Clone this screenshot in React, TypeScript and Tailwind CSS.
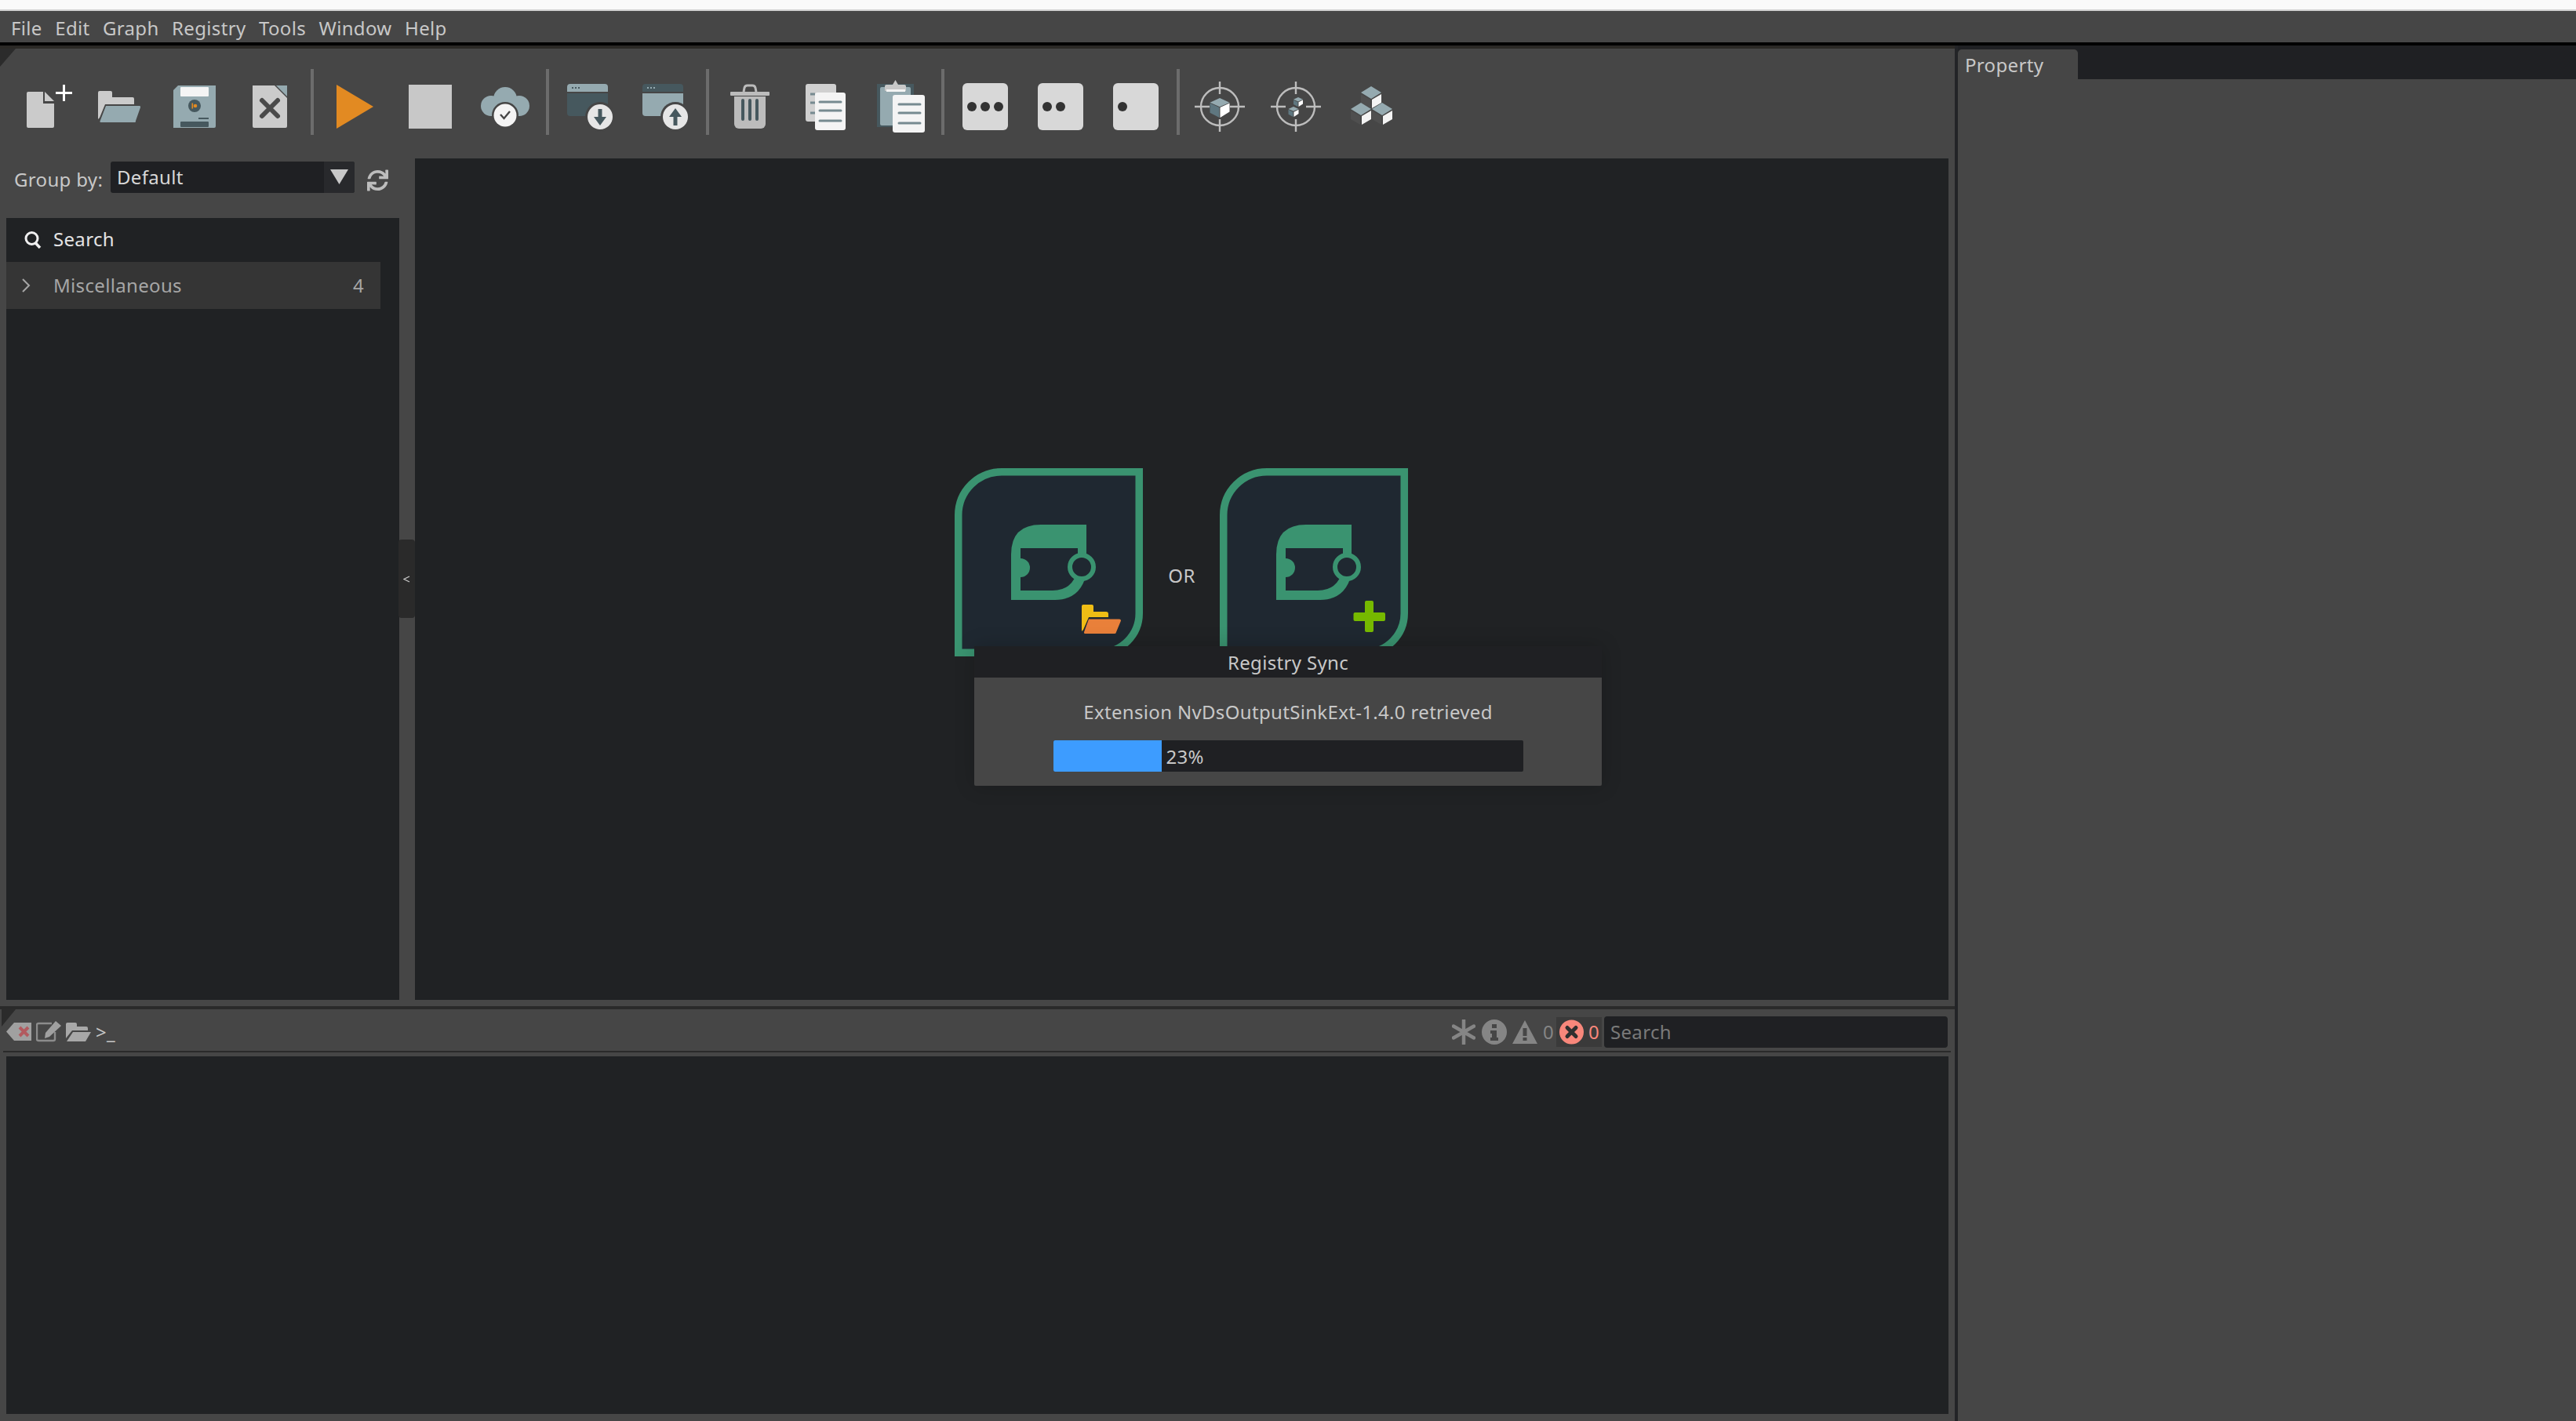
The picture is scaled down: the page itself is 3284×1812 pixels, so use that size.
import { FaSync } from 'react-icons/fa';

const MENU = ['File', 'Edit', 'Graph', 'Registry', 'Tools', 'Window', 'Help'];

const SLATE = '#95aab0';
const DEEP = '#46585e';
const LIGHT = '#cbcbcb';
const PAPER = '#f4f4f4';
const LINE = '#768a90';

function Cell({ children }: { children: React.ReactNode }) {
  return (
    <svg viewBox="0 0 96 96" className="w-[96px] h-[96px] shrink-0 overflow-visible">
      {children}
    </svg>
  );
}

function Sep() {
  return <div className="w-[4px] h-[84px] mx-[4px] bg-[#6c6c6c] shrink-0" />;
}

function Cube({ x, y, s }: { x: number; y: number; s: number }) {
  // x,y is the top point of the cube, s the half width
  const h = s * 0.45;
  return (
    <g>
      <path d={`M${x} ${y} L${x + s} ${y + h} L${x} ${y + 2 * h} L${x - s} ${y + h}Z`} fill={SLATE} />
      <path d={`M${x - s} ${y + h + 0.8} L${x - 0.5} ${y + 2 * h + 0.8} V${y + 2 * h + s * 1.1} L${x - s} ${y + h + s * 1.05}Z`} fill="#5f7780" />
      <path d={`M${x + s} ${y + h + 0.8} L${x + 0.5} ${y + 2 * h + 0.8} V${y + 2 * h + s * 1.1} L${x + s} ${y + h + s * 0.95}Z`} fill="#ffffff" />
    </g>
  );
}

function Target({ cx, children }: { cx: number; children: React.ReactNode }) {
  return (
    <Cell>
      <circle cx={cx} cy={48} r={24} fill="none" stroke="#bdbdbd" strokeWidth={2.4} />
      <path
        d={`M${cx} 16 V32 M${cx} 64 V80 M${cx - 32} 48 H${cx - 13} M${cx + 13} 48 H${cx + 32}`}
        stroke="#bdbdbd"
        strokeWidth={2.4}
        fill="none"
      />
      {children}
    </Cell>
  );
}

function Card({ dots }: { dots: number }) {
  const xs = [31, 48, 65].slice(0, dots);
  return (
    <Cell>
      <rect x={19} y={18} width={58} height={60} rx={6} fill="#d8d8d8" />
      {xs.map((x) => (
        <circle key={x} cx={x} cy={48} r={6} fill="#333333" />
      ))}
    </Cell>
  );
}

function Block({ cx, cy }: { cx: number; cy: number }) {
  return (
    <g>
      <path d={`M${cx} ${cy - 8} L${cx + 13} ${cy} L${cx} ${cy + 8} L${cx - 13} ${cy}Z`} fill={SLATE} />
      <path d={`M${cx - 13} ${cy + 2} L${cx - 1} ${cy + 9} V${cy + 20} L${cx - 13} ${cy + 13}Z`} fill="#4f4f4f" />
      <path d={`M${cx + 13} ${cy + 2} L${cx + 1} ${cy + 9} V${cy + 20} L${cx + 13} ${cy + 13}Z`} fill="#f4f4f4" />
    </g>
  );
}

function Toolbar() {
  return (
    <div className="relative h-[140px] bg-[#464646] flex items-start pt-[26px] pl-[8px]">
      <svg viewBox="0 0 20 23" className="absolute left-0 top-0 w-[20px] h-[23px]">
        <path d="M0 0H20L0 23Z" fill="#2b2b2b" />
      </svg>

      {/* new */}
      <Cell>
        <path d="M28 29H47V44H61V73a2 2 0 0 1-2 2H28a2 2 0 0 1-2-2V31a2 2 0 0 1 2-2Z" fill={LIGHT} />
        <path d="M49 29L61 41H49Z" fill={LIGHT} />
        <path d="M63 30.5H84M73.5 20V41" stroke="#ffffff" strokeWidth={3} />
      </Cell>
      {/* open */}
      <Cell>
        <path d="M21 30a2 2 0 0 1 2-2h14a2 2 0 0 1 2 2v6h26a2 2 0 0 1 2 2v7H30L23 62l-2 2Z" fill={LIGHT} />
        <path d="M31 47H74a1.5 1.5 0 0 1 1 2L69 66a1.5 1.5 0 0 1-1.5 2H24.5a1 1 0 0 1-1-1.5Z" fill={SLATE} />
      </Cell>
      {/* save */}
      <Cell>
        <path d="M27 21H75V73a2 2 0 0 1-2 2H21V27Z" fill={SLATE} />
        <rect x={30} y={23} width={36} height={12} rx={1} fill={PAPER} />
        <circle cx={48} cy={47} r={8} fill={DEEP} />
        <rect x={44.5} y={43.5} width={1.6} height={7} fill="#e28a22" />
        <circle cx={49} cy={47} r={2.3} fill="#e28a22" />
        <rect x={53} y={62} width={13} height={2} fill={DEEP} />
        <rect x={30} y={67} width={36} height={7} rx={1} fill={DEEP} />
      </Cell>
      {/* close */}
      <Cell>
        <path d="M26 21H54L70 37V73a2 2 0 0 1-2 2H28a2 2 0 0 1-2-2Z" fill={LIGHT} />
        <path d="M56 21H70V35Z" fill={SLATE} />
        <path d="M38 40L58 60M58 40L38 60" stroke="#4a4a4a" strokeWidth={6} strokeLinecap="round" />
      </Cell>
      <Sep />
      {/* run */}
      <Cell>
        <path d="M25 20L72 48L25 76Z" fill="#e28a22" />
      </Cell>
      {/* stop */}
      <Cell>
        <rect x={21} y={20} width={55} height={56} fill="#c8c8c8" />
      </Cell>
      {/* sync */}
      <Cell>
        <circle cx={48} cy={38} r={15} fill={SLATE} />
        <circle cx={30} cy={47} r={13} fill={SLATE} />
        <circle cx={66} cy={47} r={13} fill={SLATE} />
        <rect x={30} y={42} width={36} height={18} fill={SLATE} />
        <circle cx={48} cy={59} r={17} fill="#464646" />
        <circle cx={48} cy={59} r={14.5} fill={PAPER} />
        <path d="M42 58l4.5 5L54 54" stroke="#464646" strokeWidth={2.4} fill="none" />
      </Cell>
      <Sep />
      {/* import */}
      <Cell>
        <path d="M19 29V23a4 4 0 0 1 4-4H67a4 4 0 0 1 4 4V29Z" fill={SLATE} />
        <path d="M19 31H71V56a4 4 0 0 1-4 4H23a4 4 0 0 1-4-4Z" fill={DEEP} />
        <path d="M25 24h2M29 24h2M33 24h2" stroke={DEEP} strokeWidth={2} />
        <circle cx={61} cy={61} r={19} fill="#464646" />
        <circle cx={61} cy={61} r={16} fill="#e6e6e6" />
        <path d="M58.5 51h5v10h5.5l-8 11-8-11h5.5Z" fill={DEEP} />
      </Cell>
      {/* export */}
      <Cell>
        <path d="M19 29V23a4 4 0 0 1 4-4H67a4 4 0 0 1 4 4V29Z" fill={DEEP} />
        <path d="M19 31H71V56a4 4 0 0 1-4 4H23a4 4 0 0 1-4-4Z" fill={SLATE} />
        <path d="M25 24h2M29 24h2M33 24h2" stroke={SLATE} strokeWidth={2} />
        <circle cx={61} cy={61} r={19} fill="#464646" />
        <circle cx={61} cy={61} r={16} fill="#e6e6e6" />
        <path d="M58.5 72h5V61h5.5l-8-11-8 11h5.5Z" fill={DEEP} />
      </Cell>
      <Sep />
      {/* delete */}
      <Cell>
        <path d="M40 29l1-5a4 4 0 0 1 4-3h6a4 4 0 0 1 4 3l1 5" stroke="#bcbcbc" strokeWidth={3} fill="none" />
        <rect x={23} y={29} width={50} height={5} rx={1} fill="#bcbcbc" />
        <path d="M28 35H68V70a6 6 0 0 1-6 6H34a6 6 0 0 1-6-6Z" fill="#bcbcbc" />
        <path d="M39 40V64M48 40V64M57 40V64" stroke={DEEP} strokeWidth={4} strokeLinecap="round" />
      </Cell>
      {/* copy */}
      <Cell>
        <rect x={23} y={19} width={39} height={48} rx={3} fill="#d0d0d0" />
        <path d="M29 32h6M29 43h6M29 56h6" stroke={LINE} strokeWidth={3} />
        <rect x={35} y={30} width={39} height={48} rx={3} fill={PAPER} />
        <path d="M41 42H68M41 53H68M41 66H68" stroke={LINE} strokeWidth={3} strokeLinecap="round" />
      </Cell>
      {/* paste */}
      <Cell>
        <rect x={18} y={19} width={47} height={55} fill={DEEP} />
        <rect x={22} y={23} width={39} height={49} rx={2} fill={SLATE} />
        <path d="M28 28V22a2 2 0 0 1 2-2h8l3.5-6 3.5 6h8a2 2 0 0 1 2 2V28Z" fill="#c8c8c8" />
        <rect x={30} y={26} width={24} height={3} fill={PAPER} />
        <rect x={38} y={33} width={41} height={48} rx={3} fill={PAPER} />
        <path d="M46 45H73M46 56H73M46 69H73" stroke={LINE} strokeWidth={3} strokeLinecap="round" />
      </Cell>
      <Sep />
      <Card dots={3} />
      <Card dots={2} />
      <Card dots={1} />
      <Sep />
      <Target cx={47}>
        <Cube x={47} y={37} s={12.5} />
      </Target>
      <Target cx={48}>
        <Cube x={51} y={36} s={6} />
        <Cube x={45} y={48} s={6.5} />
      </Target>
      <Cell>
        <Block cx={48} cy={30} />
        <Block cx={35} cy={51} />
        <Block cx={62} cy={51} />
      </Cell>
    </div>
  );
}

function GraphLogo({ children }: { children: React.ReactNode }) {
  return (
    <svg viewBox="0 0 240 240" className="w-[240px] h-[240px] mb-[36px] shrink-0 -translate-x-[1px]">
      <path
        d="M4.75 235.25V60A55.25 55.25 0 0 1 60 4.75H235.25V185A50.25 50.25 0 0 1 185 235.25Z"
        fill="#1f2831"
        stroke="#3a9370"
        strokeWidth={9.5}
      />
      <path
        fillRule="evenodd"
        d="M72 168V110Q72 72 110 72H168V135Q160 168 128 168ZM84 102V156H125Q150 156 157 130V102Z"
        fill="#3a9370"
      />
      <path d="M84 115a12 12 0 0 1 0 24Z" fill="#3a9370" />
      <circle cx={162} cy={126} r={15} fill="#1f2831" stroke="#3a9370" strokeWidth={6} />
      {children}
    </svg>
  );
}

function Canvas() {
  return (
    <div className="relative w-[1955px] h-full bg-[#202224] flex items-center justify-center pb-[8px]">
      <GraphLogo>
        <path d="M162 176a2 2 0 0 1 2-2h11a2 2 0 0 1 2 2v7h16a3 3 0 0 1 3 3v4h-25l-7 16-2 2Z" fill="#efbd15" />
        <path d="M171 192.5H210a2 2 0 0 1 2 2L206 209a2 2 0 0 1-2 2H166a1.5 1.5 0 0 1-1-2Z" fill="#e9803a" />
      </GraphLogo>
      <div className="w-[98px] -mt-[2px] text-center leading-[32px] text-[#c8c8c8]">OR</div>
      <GraphLogo>
        <rect x={185} y={169} width={11} height={40} rx={2} fill="#76b900" />
        <rect x={170.5} y={184} width={40.5} height={11} rx={2} fill="#76b900" />
      </GraphLogo>

      {/* Registry Sync dialog */}
      <div className="absolute left-[713px] top-[622px] w-[800px] h-[178px] flex flex-col shadow-[0_0_24px_rgba(0,0,0,0.2)]">
        <div className="h-[40px] bg-[#1f2023] text-center leading-[42px] text-[#c8c8c8]">Registry Sync</div>
        <div className="flex-1 bg-[#464646] rounded-b-[2px] flex flex-col items-center">
          <div className="h-[80px] pt-[26px] leading-[36px] text-[#c8c8c8]">Extension NvDsOutputSinkExt-1.4.0 retrieved</div>
          <div className="w-[599px] h-[40px] bg-[#1f2023] rounded-[2px] flex items-center">
            <div className="w-[138px] h-full bg-[#3d9cff] rounded-l-[2px]" />
            <span className="ml-[6px] mt-[1px] text-[#c8c8c8]">23%</span>
          </div>
        </div>
      </div>
    </div>
  );
}

function SidePanel() {
  return (
    <div className="relative w-[529px] h-full flex flex-col">
      <div className="h-[76px] flex items-start pt-[4px] pl-[18px]">
        <span className="w-[123px] h-[40px] mt-[3px] leading-[40px] text-[#c8c8c8]">Group by:</span>
        <div className="w-[311px] h-[40px] bg-[#1f2023] rounded-[3px] flex overflow-hidden">
          <span className="flex-1 pl-[8px] leading-[40px] text-[#d8d8d8]">Default</span>
          <div className="w-[39px] bg-[#28292c] flex items-start justify-center pt-[10px]">
            <svg viewBox="0 0 23 19" className="w-[23px] h-[19px]">
              <path d="M0 0H23L11.5 19Z" fill="#c8c8c8" />
            </svg>
          </div>
        </div>
        <FaSync className="ml-[16px] mt-[10px] w-[27px] h-[28px] text-[#bdbdbd]" />
      </div>
      <div className="flex-1 ml-[8px] mr-[20px] bg-[#202224]">
        <div className="h-[56px] flex items-center pl-[23px]">
          <svg viewBox="0 0 22 22" className="w-[22px] h-[22px]">
            <circle cx={9.5} cy={9} r={7.5} fill="none" stroke="#f0f0f0" strokeWidth={3} />
            <path d="M14 14.5L20 21" stroke="#f0f0f0" strokeWidth={3.5} />
          </svg>
          <span className="ml-[15px] -mt-[2px] text-[#e4e4e4]">Search</span>
        </div>
        <div className="w-[477px] h-[60px] bg-[#353535] flex items-center pl-[19px] pr-[21px] text-[#a6a6a6]">
          <svg viewBox="0 0 12 18" className="w-[12px] h-[18px]">
            <path d="M2 1L10 9L2 17" fill="none" stroke="#a6a6a6" strokeWidth={2} />
          </svg>
          <span className="ml-[29px] flex-1">Miscellaneous</span>
          <span>4</span>
        </div>
      </div>
      {/* collapse handle */}
      <div className="absolute left-[508px] top-[486px] w-[21px] h-[100px] bg-[#2a2a2a] rounded-[4px] flex items-center justify-center">
        <svg viewBox="0 0 9 9" className="w-[9px] h-[9px]">
          <path d="M8 1L1 4.5L8 8" fill="none" stroke="#c8c8c8" strokeWidth={1.3} />
        </svg>
      </div>
    </div>
  );
}

function ConsoleBar() {
  return (
    <div className="h-[55px] ml-[4px] mr-[5px] bg-[#464646] border-b-[2px] border-[#2a2a2a] flex items-center relative">
      <svg viewBox="0 0 18 22" className="absolute -left-[4px] top-0 w-[22px] h-[22px]">
        <path d="M0 0H18L0 22Z" fill="#2b2b2b" />
      </svg>
      <div className="ml-[4px] flex items-center mt-[4px]">
        <svg viewBox="0 0 32 24" className="w-[32px] h-[24px]">
          <path d="M10 0H32V23H10L0 11.5Z" fill="#a0a0a0" />
          <path d="M17 6L28 17M28 6L17 17" stroke="#b25a5f" strokeWidth={4} />
        </svg>
        <svg viewBox="0 0 32 27" className="ml-[6px] w-[32px] h-[27px]">
          <path d="M20 3H3a2 2 0 0 0-2 2V23a2 2 0 0 0 2 2H22a2 2 0 0 0 2-2V14" fill="none" stroke="#8c8c8c" strokeWidth={2.4} />
          <path d="M25 0L32 6L17 20L11 22L12 15Z" fill="#a0a0a0" />
        </svg>
        <svg viewBox="0 0 32 24" className="ml-[6px] w-[32px] h-[24px]">
          <path d="M0 2a2 2 0 0 1 2-2h10a2 2 0 0 1 2 2v3h12a2 2 0 0 1 2 2v3H8L0 20Z" fill="#a8a8a8" />
          <path d="M9 12H32L25 24H1Z" fill="#a8a8a8" />
        </svg>
        <span className="ml-[6px] text-[#c8c8c8] leading-[28px]">&gt;_</span>
      </div>

      <div className="ml-auto flex items-center pr-[4px] h-[38px] mt-[4px]">
        <svg viewBox="0 0 30 32" className="w-[30px] h-[32px]">
          <path d="M15 1V31M2 8.5L28 23.5M28 8.5L2 23.5" stroke="#858585" strokeWidth={4.5} strokeLinecap="round" />
        </svg>
        <svg viewBox="0 0 32 32" className="ml-[8px] w-[32px] h-[32px]">
          <circle cx={16} cy={16} r={16} fill="#858585" />
          <rect x={13} y={6} width={6} height={5} fill="#464646" />
          <path d="M11 14H19V23H21V27H11V23H13V18H11Z" fill="#464646" />
        </svg>
        <svg viewBox="0 0 32 30" className="ml-[7px] w-[32px] h-[30px]">
          <path d="M16 0L32 30H0Z" fill="#858585" />
          <rect x={13.5} y={10} width={5} height={10} fill="#464646" />
          <rect x={13.5} y={22} width={5} height={4} fill="#464646" />
        </svg>
        <span className="ml-[7px] w-[13px] text-[#858585]">0</span>
        <div className="ml-[4px] w-[58px] h-[38px] bg-[#3a3a3a] flex items-center pl-[4px]">
          <svg viewBox="0 0 31 32" className="w-[31px] h-[32px]">
            <circle cx={15.5} cy={16} r={15.5} fill="#f8877b" />
            <path d="M10 10.5L21 21.5M21 10.5L10 21.5" stroke="#2f2f2f" strokeWidth={5} strokeLinecap="round" />
          </svg>
          <span className="ml-[6px] text-[#f8877b]">0</span>
        </div>
        <div className="ml-[3px] w-[438px] h-[40px] bg-[#1f2023] rounded-[4px] pl-[8px] leading-[40px] text-[#7a7a7a]">Search</div>
      </div>
    </div>
  );
}

export default function App() {
  return (
    <div className="w-[3284px] h-[1812px] flex flex-col overflow-hidden bg-[#464646] font-['Noto_Sans',sans-serif] text-[24px] tracking-[0.33px]">
      <div className="h-[12px] bg-[#fafafa] shrink-0" />
      <div className="h-[2px] bg-[#d0d0d0] shrink-0" />

      {/* Menu */}
      <div className="h-[40px] shrink-0 flex items-center gap-[16.5px] pl-[14px] pt-[3px] text-[#c8c8c8]">
        {MENU.map((m) => (
          <span key={m}>{m}</span>
        ))}
      </div>
      <div className="h-[4px] bg-black shrink-0" />

      <div className="flex-1 flex min-h-0">
        {/* Main window */}
        <div className="w-[2492px] flex flex-col">
          <div className="h-[4px] bg-[#2b2926] shrink-0" />
          <Toolbar />
          <div className="h-[1073px] flex shrink-0">
            <SidePanel />
            <Canvas />
          </div>
          <div className="h-[8px] shrink-0" />
          <div className="h-[4px] bg-[#2a2a2a] shrink-0" />
          <ConsoleBar />
          <div className="h-[5px] shrink-0" />
          <div className="h-[456px] mx-[8px] bg-[#202224] shrink-0" />
        </div>

        {/* Property dock */}
        <div className="w-[4px] bg-[#232427] shrink-0" />
        <div className="flex-1 flex flex-col">
          <div className="h-[43px] bg-[#1f2023] flex items-end shrink-0">
            <div className="w-[153px] h-[38px] bg-[#464646] rounded-t-[5px] pl-[9px] leading-[40px] text-[#c8c8c8]">Property</div>
          </div>
          <div className="flex-1 bg-[#464646]" />
        </div>
      </div>
    </div>
  );
}
